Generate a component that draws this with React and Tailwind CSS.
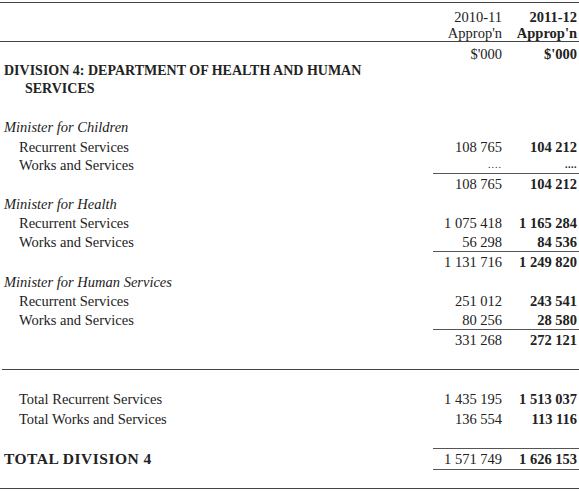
const rows = [
  { kind: 'minister', label: 'Minister for Children' },
  { label: 'Recurrent Services', a: '108 765', b: '104 212' },
  { label: 'Works and Services', a: '....', b: '....', dots: true, rule: true },
  { kind: 'total', a: '108 765', b: '104 212' },
  { kind: 'minister', label: 'Minister for Health' },
  { label: 'Recurrent Services', a: '1 075 418', b: '1 165 284' },
  { label: 'Works and Services', a: '56 298', b: '84 536', rule: true },
  { kind: 'total', a: '1 131 716', b: '1 249 820' },
  { kind: 'minister', label: 'Minister for Human Services' },
  { label: 'Recurrent Services', a: '251 012', b: '243 541' },
  { label: 'Works and Services', a: '80 256', b: '28 580', rule: true },
  { kind: 'total', a: '331 268', b: '272 121' },
];

const heights = [19.5, 19.5, 17.5, 20, 19.5, 19.5, 19, 21, 19, 19, 19, 21];

function Row({ row, h }) {
  const label =
    row.kind === 'minister' ? (
      <span className="pl-[4px] italic">{row.label}</span>
    ) : (
      <span className="pl-[19px]">{row.label}</span>
    );
  return (
    <div className="flex items-center" style={{ height: h }}>
      <div className="flex-1">{row.label && label}</div>
      <div className={`flex h-full w-[146px] items-center ${row.rule ? 'border-b border-[#555]' : ''}`}>
        <div className={`w-[69px] text-right ${row.dots ? 'text-[10px] tracking-[1px]' : ''}`}>{row.a}</div>
        <div className={`w-[77px] pr-[2px] text-right font-bold ${row.dots ? 'text-[10px] tracking-[0.5px]' : ''}`}>{row.b}</div>
      </div>
    </div>
  );
}

export default function App() {
  return (
    <div
      className="h-[491px] w-[579px] overflow-hidden bg-white text-[14.5px] leading-none text-[#222]"
      style={{ fontFamily: '"Liberation Serif", "Times New Roman", serif' }}
    >
      <div className="h-[2px]" />
      <div className="border-t border-[#444]" />

      {/* column headings */}
      <div className="h-[6px]" />
      <div className="flex h-[16px] items-center justify-end">
        <div className="w-[69px] text-right">2010-11</div>
        <div className="w-[77px] pr-[2px] text-right font-bold">2011-12</div>
      </div>
      <div className="flex h-[16px] items-center justify-end">
        <div className="w-[69px] text-right">Approp'n</div>
        <div className="w-[77px] pr-[2px] text-right font-bold">Approp'n</div>
      </div>
      <div className="border-t border-[#444]" />
      <div className="h-[4px]" />
      <div className="flex h-[16px] items-center justify-end">
        <div className="w-[69px] text-right">$'000</div>
        <div className="w-[77px] pr-[2px] text-right font-bold">$'000</div>
      </div>

      <div className="flex h-[18px] items-center pl-[4px] text-[14px] font-bold">
        DIVISION 4: DEPARTMENT OF HEALTH AND HUMAN
      </div>
      <div className="flex h-[18px] items-center pl-[25px] text-[14px] font-bold">SERVICES</div>

      <div className="h-[19.5px]" />
      {rows.map((r, i) => (
        <Row key={i} row={r} h={heights[i]} />
      ))}

      <div className="h-[18px]" />
      <div className="ml-[2px] border-t border-[#444]" />
      <div className="h-[19px]" />

      <Row row={{ label: 'Total Recurrent Services', a: '1 435 195', b: '1 513 037' }} h={20} />
      <Row row={{ label: 'Total Works and Services', a: '136 554', b: '113 116' }} h={20} />
      <div className="h-[19px]" />

      <div className="flex h-[22px] items-center">
        <div className="flex-1 pl-[4px] text-[15.5px] font-bold tracking-[0.5px]">TOTAL DIVISION 4</div>
        <div className="flex h-full w-[146px] items-center border-y border-[#555]">
          <div className="w-[69px] text-right">1 571 749</div>
          <div className="w-[77px] pr-[2px] text-right font-bold">1 626 153</div>
        </div>
      </div>
      <div className="h-[18px]" />
      <div className="border-t border-[#444]" />
    </div>
  );
}
